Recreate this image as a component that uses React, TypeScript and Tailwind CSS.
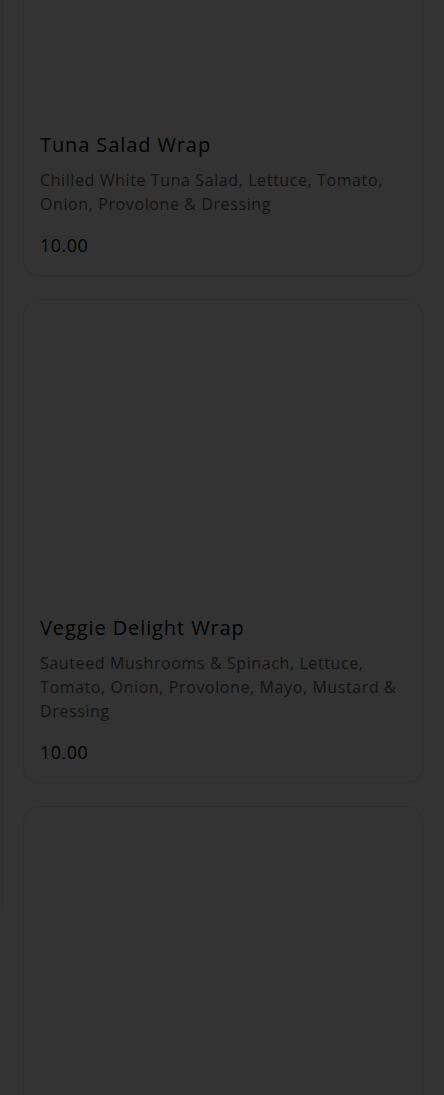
interface MenuItem {
  name: string;
  description: string;
  price: string;
}

const items: MenuItem[] = [
  {
    name: 'Tuna Salad Wrap',
    description: 'Chilled White Tuna Salad, Lettuce, Tomato, Onion, Provolone & Dressing',
    price: '10.00',
  },
  {
    name: 'Veggie Delight Wrap',
    description: 'Sauteed Mushrooms & Spinach, Lettuce, Tomato, Onion, Provolone, Mayo, Mustard & Dressing',
    price: '10.00',
  },
];

function MenuCard({ item }: { item?: MenuItem }) {
  return (
    <div className="bg-white border border-[#e6e6e6] rounded-2xl p-4 shadow-[0_1px_3px_rgba(0,0,0,0.06)]">
      <div className={`h-[282px] rounded-xl bg-white ${item ? 'mb-4' : ''}`} />
      {item && (
        <>
          <h3 className="text-[20px] leading-7 font-medium text-black tracking-[0.9px]">{item.name}</h3>
          <p className="mt-[9px] text-[16px] leading-6 text-[#5c5c5c] tracking-[0.6px]">{item.description}</p>
          <p className="mt-[15px] text-[18px] leading-7 font-medium text-black tracking-[0.5px]">{item.price}</p>
        </>
      )}
    </div>
  );
}

export default function App() {
  return (
    <div className="relative h-screen bg-white overflow-hidden font-['Open_Sans',sans-serif]">
      <div className="border-l border-[#e8e8e8] ml-[2px] h-full">
        <div className="pl-5 pr-[21px] -mt-[184px] flex flex-col gap-[23px]">
          {items.map((item) => (
            <MenuCard key={item.name} item={item} />
          ))}
          <MenuCard />
        </div>
      </div>
      <div className="fixed inset-0 bg-black/80" />
    </div>
  );
}
